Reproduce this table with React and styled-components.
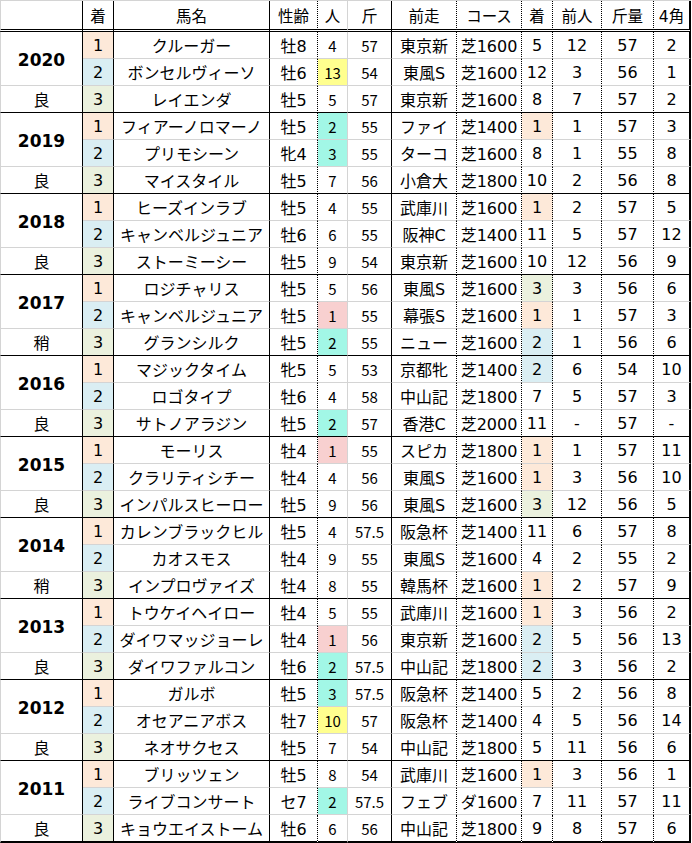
import React from "react";
import styled, { createGlobalStyle } from "styled-components";

const GlobalStyle = createGlobalStyle`
  body {
    margin: 0;
    background: #fff;
    color: #000;
    font-family: "DejaVu Sans", "Noto Sans CJK JP", sans-serif;
  }
`;

const GRID_GRAY = "#d4d4d4";

const rankColors = {
  1: "#fde9d9",
  2: "#daeef3",
  3: "#ebf1de",
};

const popColor = (p) => {
  if (p === 1) return "#f8d0d0";
  if (p === 2 || p === 3) return "#a2f7e6";
  if (p >= 10) return "#ffff8f";
  return "transparent";
};

// width and right-hand border of each column
const columns = [
  { w: 83, right: "solid" },
  { w: 31, right: "solid" },
  { w: 156, right: "solid" },
  { w: 48, right: "dotted" },
  { w: 30, right: "gray" },
  { w: 44, right: "solid" },
  { w: 65, right: "dotted" },
  { w: 65, right: "dotted" },
  { w: 31, right: "dotted" },
  { w: 49, right: "dotted" },
  { w: 52, right: "dotted" },
  { w: 37, right: "thick" },
];

const headers = ["", "着", "馬名", "性齢", "人", "斤", "前走", "コース", "着", "前人", "斤量", "4角"];

const races = [
  {
    year: "2020",
    going: "良",
    rows: [
      ["クルーガー", "牡8", 4, "57", "東京新", "芝1600", 5, "12", "57", "2"],
      ["ボンセルヴィーソ", "牡6", 13, "54", "東風S", "芝1600", 12, "3", "56", "1"],
      ["レイエンダ", "牡5", 5, "57", "東京新", "芝1600", 8, "7", "57", "2"],
    ],
  },
  {
    year: "2019",
    going: "良",
    rows: [
      ["フィアーノロマーノ", "牡5", 2, "55", "ファイ", "芝1400", 1, "1", "57", "3"],
      ["プリモシーン", "牝4", 3, "55", "ターコ", "芝1600", 8, "1", "55", "8"],
      ["マイスタイル", "牡5", 7, "56", "小倉大", "芝1800", 10, "2", "56", "8"],
    ],
  },
  {
    year: "2018",
    going: "良",
    rows: [
      ["ヒーズインラブ", "牡5", 4, "55", "武庫川", "芝1600", 1, "2", "57", "5"],
      ["キャンベルジュニア", "牡6", 6, "55", "阪神C", "芝1400", 11, "5", "57", "12"],
      ["ストーミーシー", "牡5", 9, "54", "東京新", "芝1600", 10, "12", "56", "9"],
    ],
  },
  {
    year: "2017",
    going: "稍",
    rows: [
      ["ロジチャリス", "牡5", 5, "56", "東風S", "芝1600", 3, "3", "56", "6"],
      ["キャンベルジュニア", "牡5", 1, "55", "幕張S", "芝1600", 1, "1", "57", "3"],
      ["グランシルク", "牡5", 2, "55", "ニュー", "芝1600", 2, "1", "56", "6"],
    ],
  },
  {
    year: "2016",
    going: "良",
    rows: [
      ["マジックタイム", "牝5", 5, "53", "京都牝", "芝1400", 2, "6", "54", "10"],
      ["ロゴタイプ", "牡6", 4, "58", "中山記", "芝1800", 7, "5", "57", "3"],
      ["サトノアラジン", "牡5", 2, "57", "香港C", "芝2000", 11, "-", "57", "-"],
    ],
  },
  {
    year: "2015",
    going: "良",
    rows: [
      ["モーリス", "牡4", 1, "55", "スピカ", "芝1800", 1, "1", "57", "11"],
      ["クラリティシチー", "牡4", 4, "56", "東風S", "芝1600", 1, "3", "56", "10"],
      ["インパルスヒーロー", "牡5", 9, "56", "東風S", "芝1600", 3, "12", "56", "5"],
    ],
  },
  {
    year: "2014",
    going: "稍",
    rows: [
      ["カレンブラックヒル", "牡5", 4, "57.5", "阪急杯", "芝1400", 11, "6", "57", "8"],
      ["カオスモス", "牡4", 9, "55", "東風S", "芝1600", 4, "2", "55", "2"],
      ["インプロヴァイズ", "牡4", 8, "55", "韓馬杯", "芝1600", 1, "2", "57", "9"],
    ],
  },
  {
    year: "2013",
    going: "良",
    rows: [
      ["トウケイヘイロー", "牡4", 5, "55", "武庫川", "芝1600", 1, "3", "56", "2"],
      ["ダイワマッジョーレ", "牡4", 1, "56", "東京新", "芝1600", 2, "5", "56", "13"],
      ["ダイワファルコン", "牡6", 2, "57.5", "中山記", "芝1800", 2, "3", "56", "2"],
    ],
  },
  {
    year: "2012",
    going: "良",
    rows: [
      ["ガルボ", "牡5", 3, "57.5", "阪急杯", "芝1400", 5, "2", "56", "8"],
      ["オセアニアボス", "牡7", 10, "57", "阪急杯", "芝1400", 4, "5", "56", "14"],
      ["ネオサクセス", "牡5", 7, "54", "中山記", "芝1800", 5, "11", "56", "6"],
    ],
  },
  {
    year: "2011",
    going: "良",
    rows: [
      ["ブリッツェン", "牡5", 8, "54", "武庫川", "芝1600", 1, "3", "56", "1"],
      ["ライブコンサート", "セ7", 2, "57.5", "フェブ", "ダ1600", 7, "11", "57", "11"],
      ["キョウエイストーム", "牡6", 6, "56", "中山記", "芝1800", 9, "8", "57", "6"],
    ],
  },
];

const rightBorder = {
  solid: "1px solid #000",
  dotted: "1px dotted #000",
  gray: `1px solid ${GRID_GRAY}`,
  thick: "2px solid #000",
};

const bottomBorder = {
  gray: `1px solid ${GRID_GRAY}`,
  black: "1px solid #000",
  thick: "2px solid #000",
  double: "3px double #000",
};

const Sheet = styled.div`
  display: flex;
  flex-direction: column;
  width: ${columns.reduce((s, c) => s + c.w, 0)}px;
  border-top: 1px solid ${GRID_GRAY};
`;

const Band = styled.div`
  display: grid;
  grid-template-columns: ${columns.map((c) => `${c.w}px`).join(" ")};
  grid-template-rows: ${(p) => p.$rows};
`;

const Cell = styled.div`
  box-sizing: border-box;
  display: flex;
  align-items: center;
  justify-content: center;
  white-space: nowrap;
  overflow: hidden;
  font-size: ${(p) => p.$size || 16}px;
  font-family: ${(p) =>
    p.$narrow
      ? `"Noto Sans CJK JP", sans-serif`
      : `"DejaVu Sans", "Noto Sans CJK JP", sans-serif`};
  background: ${(p) => p.$bg || "transparent"};
  border-right: ${(p) => rightBorder[p.$right]};
  border-bottom: ${(p) => bottomBorder[p.$bottom]};
  border-left: ${(p) => (p.$edge ? `1px solid ${GRID_GRAY}` : "none")};
`;

const YearCell = styled(Cell)`
  grid-column: 1;
  grid-row: 1 / span 2;
  font-weight: bold;
  font-size: 17px;
  padding-top: 2px;
`;

const GoingCell = styled(Cell)`
  grid-column: 1;
  grid-row: 3;
`;

const HeaderRow = () => (
  <Band $rows="31px">
    {headers.map((h, i) => (
      <Cell
        key={i}
        $right={columns[i].right}
        $bottom="double"
        $edge={i === 0}
        $size={15.5}
      >
        {h}
      </Cell>
    ))}
  </Band>
);

const RaceGroup = ({ race, last }) => {
  const groupEnd = last ? "thick" : "black";
  return (
    <Band $rows={last ? "27px 27px 28px" : "repeat(3, 27px)"}>
      <YearCell $right="solid" $bottom="gray" $edge>
        {race.year}
      </YearCell>
      <GoingCell $right="solid" $bottom={groupEnd} $edge>
        {race.going}
      </GoingCell>
      {race.rows.map((r, idx) => {
        const rank = idx + 1;
        const bottom = idx === 2 ? groupEnd : "gray";
        const [name, sex, pop, kin, prev, course, prevRank, prevPop, carried, corner] = r;
        const cells = [
          { v: rank, bg: rankColors[rank] },
          { v: name },
          { v: sex },
          { v: pop, bg: popColor(pop), narrow: true, size: 15 },
          { v: kin, narrow: true, size: 15 },
          { v: prev },
          { v: course },
          { v: prevRank, bg: rankColors[prevRank] },
          { v: prevPop },
          { v: carried },
          { v: corner },
        ];
        return cells.map((c, ci) => (
          <Cell
            key={`${idx}-${ci}`}
            $right={columns[ci + 1].right}
            $bottom={bottom}
            $bg={c.bg}
            $narrow={c.narrow}
            $size={c.size}
          >
            {c.v}
          </Cell>
        ));
      })}
    </Band>
  );
};

const App = () => (
  <>
    <GlobalStyle />
    <Sheet>
      <HeaderRow />
      {races.map((race, i) => (
        <RaceGroup key={race.year} race={race} last={i === races.length - 1} />
      ))}
    </Sheet>
  </>
);

export default App;
